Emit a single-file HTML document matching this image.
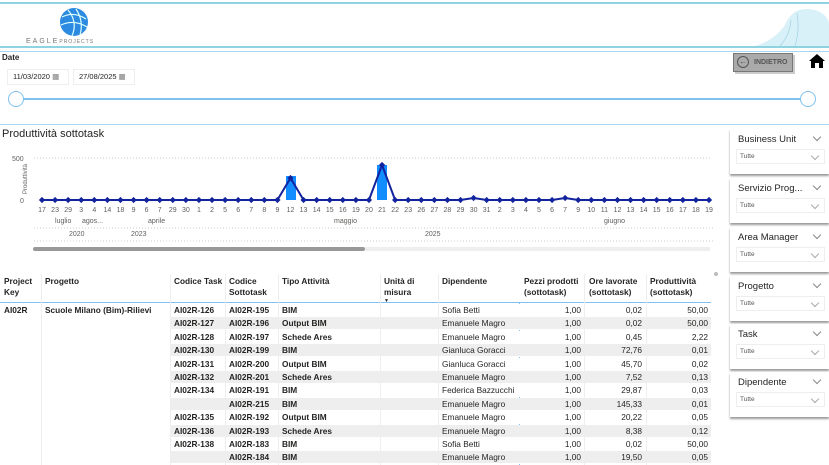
<!DOCTYPE html>
<html><head><meta charset="utf-8"><style>
*{margin:0;padding:0;box-sizing:border-box}
body{width:829px;height:465px;overflow:hidden;background:#fff;font-family:"Liberation Sans",sans-serif;position:relative;color:#252423}
.a{position:absolute}
.hl{position:absolute;left:0;width:829px;height:2px;background:#8fd3e0}
.row{position:absolute;left:0;width:711px;height:13.4px;font-size:8.3px;line-height:13.4px}
.row span{position:absolute;white-space:nowrap}
.r{text-align:right}
.card{position:absolute;left:730px;width:99px;background:#fff;box-shadow:0 2px 2px #999;}
.card b{position:absolute;left:8px;top:5px;font-size:9.5px;font-weight:normal;color:#252423}
.card i{position:absolute;right:9px;top:5px;width:6px;height:6px;border-right:1px solid #888;border-bottom:1px solid #888;transform:rotate(45deg)}
.dd{position:absolute;left:6px;right:4px;top:20px;height:15px;border:1px solid #eee;font-size:6.5px;line-height:13px;padding-left:3px;color:#555}
.dd:after{content:"";position:absolute;right:6px;top:3px;width:5px;height:5px;border-right:1px solid #aaa;border-bottom:1px solid #aaa;transform:rotate(45deg)}
</style></head><body>
<div class="hl" style="top:2px"></div>
<div class="hl" style="top:46px"></div>
<div class="a" style="top:51px;left:0;width:829px;height:1px;background:#a8d8f0"></div>
<div class="a" style="top:124px;left:0;width:829px;height:1px;background:#a8d8f0"></div>
<svg class="a" style="left:58px;top:7px" width="32" height="30" viewBox="0 0 32 30"><circle cx="16" cy="15" r="14" fill="#2c8be0"/><path d="M4 10 Q16 4 28 12 M3 18 Q16 12 29 20 M10 3 Q20 15 14 29 M18 2 Q26 14 22 28" stroke="#dff" stroke-width="1.2" fill="none"/></svg>
<div class="a" style="left:26px;top:38px;font-size:7px;letter-spacing:2px;color:#777">EAGLE<span style="font-size:5px;letter-spacing:1px">PROJECTS</span></div>
<svg class="a" style="left:755px;top:5px" width="74" height="41"><path d="M0 41 Q20 35 30 20 Q38 0 60 5 Q74 10 74 20 L74 41Z" fill="#d8f0f8"/><path d="M25 41 Q35 30 36 15 M40 41 Q45 25 42 8" stroke="#9cd" fill="none" stroke-width=".6"/></svg>
<div class="a" style="left:2px;top:53px;font-size:8px;font-weight:bold">Date</div>
<div class="a" style="left:7px;top:69px;width:62px;height:16px;border:1px solid #eee;font-size:7.5px;line-height:14px;padding-left:5px">11/03/2020 <span style="color:#777">▦</span></div>
<div class="a" style="left:73px;top:69px;width:62px;height:16px;border:1px solid #eee;font-size:7.5px;line-height:14px;padding-left:5px">27/08/2025 <span style="color:#777">▦</span></div>
<div class="a" style="left:16px;top:98px;width:795px;height:2px;background:#7fc1ef"></div>
<div class="a" style="left:8px;top:91px;width:16px;height:16px;border-radius:50%;border:1.5px solid #7fc1ef;background:#fff"></div>
<div class="a" style="left:800px;top:91px;width:16px;height:16px;border-radius:50%;border:1.5px solid #7fc1ef;background:#fff"></div>
<div class="a" style="left:733px;top:53px;width:60px;height:19px;background:#aaa;border:1px solid #777;box-shadow:2px 2px 0 #ccc;font-size:7px;font-weight:bold;color:#555;line-height:17px;padding-left:20px">INDIETRO</div>
<div class="a" style="left:737px;top:56px;width:12px;height:12px;border:1.3px solid #555;border-radius:50%;font-size:8px;line-height:9px;text-align:center;color:#555">←</div>
<svg class="a" style="left:808px;top:53px" width="18" height="16"><path d="M9 1 L1 8 L3 8 L3 15 L7 15 L7 10 L11 10 L11 15 L15 15 L15 8 L17 8Z" fill="#000"/></svg>
<div class="a" style="left:2px;top:128px;font-size:11px">Produttività sottotask</div>
<svg class="a" style="left:0;top:150px" width="725" height="105" font-family="Liberation Sans" font-size="7" fill="#605e5c">
<text x="5" y="58" transform="rotate(-90 9 40)" font-size="6">Produttività</text>
<text x="12" y="11">500</text><text x="20" y="53">0</text>
<line x1="34" y1="8" x2="712" y2="8" stroke="#ccc" stroke-dasharray="1,2"/>
<rect x="286" y="26" width="10" height="24" fill="#118dff"/>
<rect x="377" y="15" width="10" height="35" fill="#118dff"/>
<polyline id="pl" fill="none" stroke="#12239e" stroke-width="2" points=""/>
<g id="dots" fill="#12239e"></g>
<g id="lb" text-anchor="middle"></g>
<text x="55" y="73">luglio</text><text x="82" y="73">agos...</text><text x="148" y="73">aprile</text><text x="334" y="73">maggio</text><text x="604" y="73">giugno</text>
<text x="69" y="86">2020</text><text x="131" y="86">2023</text><text x="425" y="86">2025</text>
<line x1="34" y1="78" x2="715" y2="78" stroke="#ccc" stroke-dasharray="1,2"/>
<line x1="34" y1="91" x2="715" y2="91" stroke="#ccc" stroke-dasharray="1,2"/>
<rect x="33" y="97" width="332" height="4" rx="2" fill="#999"/><rect x="365" y="97" width="345" height="4" fill="#eee"/>
</svg>
<script>
var L="17 23 29 3 4 14 18 9 6 7 29 30 1 2 5 6 7 8 9 12 13 14 15 16 19 20 21 22 23 26 27 28 29 30 31 2 3 4 5 6 7 9 10 11 12 13 14 15 16 17 18 19".split(" ");
var pts=[],d="",t="",dx=(709-42)/(L.length-1);
L.forEach(function(l,i){var x=42+i*dx,y=50;if(i==19)y=28;if(i==26)y=15;if(i==33||i==40)y=48;pts.push(x+","+y);d+='<rect x="'+(x-2.2)+'" y="'+(y-2.2)+'" width="4.4" height="4.4" transform="rotate(45 '+x+' '+y+')"/>';t+='<text x="'+x+'" y="62">'+l+'</text>';});
document.getElementById("pl").setAttribute("points",pts.join(" "));
document.getElementById("dots").innerHTML=d;document.getElementById("lb").innerHTML=t;
</script>
<div class="a" style="left:0;top:272px;width:711px;height:29px;font-size:8.3px;font-weight:bold;line-height:11px">
<span class="a" style="left:4px;top:4px">Project<br>Key</span><span class="a" style="left:45px;top:4px">Progetto</span>
<span class="a" style="left:174px;top:4px">Codice Task</span><span class="a" style="left:229px;top:4px">Codice<br>Sottotask</span>
<span class="a" style="left:282px;top:4px">Tipo Attività</span><span class="a" style="left:384px;top:4px">Unità di<br>misura</span>
<span class="a" style="left:384px;top:24px;font-size:5px">▼</span>
<span class="a" style="left:442px;top:4px">Dipendente</span><span class="a" style="left:524px;top:4px">Pezzi prodotti<br>(sottotask)</span>
<span class="a" style="left:589px;top:4px">Ore lavorate<br>(sottotask)</span><span class="a" style="left:650px;top:4px">Produttività<br>(sottotask)</span>
</div>
<div class="a" style="left:0;top:302px;width:711px;height:1px;background:#7fc1ef"></div>
<div class="a" style="left:519px;top:302px;width:1px;height:163px;background:#7fc1ef"></div>
<div class="a" style="left:714px;top:272px;width:4px;height:4px;border-radius:50%;background:#bbb"></div>
<div id="tb"></div>
<script>
var R=[["AI02R-126","AI02R-195","BIM","Sofia Betti","0,02","50,00"],["AI02R-127","AI02R-196","Output BIM","Emanuele Magro","0,02","50,00"],["AI02R-128","AI02R-197","Schede Ares","Emanuele Magro","0,45","2,22"],["AI02R-130","AI02R-199","BIM","Gianluca Goracci","72,76","0,01"],["AI02R-131","AI02R-200","Output BIM","Gianluca Goracci","45,70","0,02"],["AI02R-132","AI02R-201","Schede Ares","Emanuele Magro","7,52","0,13"],["AI02R-134","AI02R-191","BIM","Federica Bazzucchi","29,87","0,03"],["","AI02R-215","BIM","Emanuele Magro","145,33","0,01"],["AI02R-135","AI02R-192","Output BIM","Emanuele Magro","20,22","0,05"],["AI02R-136","AI02R-193","Schede Ares","Emanuele Magro","8,38","0,12"],["AI02R-138","AI02R-183","BIM","Sofia Betti","0,02","50,00"],["","AI02R-184","BIM","Emanuele Magro","19,50","0,05"]];
var h="";R.forEach(function(r,i){var y=304+i*13.4,bg=i%2?"#eee":"#fff";
h+='<div class="row" style="top:'+y+'px"><span style="left:170px;width:541px;height:13px;background:'+bg+';border-bottom:1px solid #fff"></span>'+
(i==0?'<span style="left:4px;font-weight:bold">AI02R</span><span style="left:45px;font-weight:bold">Scuole Milano (Bim)-Rilievi</span>':'')+
'<span style="left:174px;font-weight:bold">'+r[0]+'</span><span style="left:229px;font-weight:bold">'+r[1]+'</span><span style="left:282px;font-weight:bold">'+r[2]+'</span><span style="left:442px">'+r[3]+'</span><span class="r" style="left:520px;width:61px">1,00</span><span class="r" style="left:585px;width:57px">'+r[4]+'</span><span class="r" style="left:647px;width:61px">'+r[5]+'</span></div>';});
document.getElementById("tb").innerHTML=h;
</script>
<div class="a" style="left:41px;top:274px;width:1px;height:191px;background:#eee"></div>
<div class="a" style="left:170px;top:274px;width:1px;height:191px;background:#eee"></div>
<div class="a" style="left:225px;top:274px;width:1px;height:191px;background:#eee"></div>
<div class="a" style="left:278px;top:274px;width:1px;height:191px;background:#eee"></div>
<div class="a" style="left:380px;top:274px;width:1px;height:191px;background:#eee"></div>
<div class="a" style="left:438px;top:274px;width:1px;height:191px;background:#eee"></div>
<div class="a" style="left:584px;top:274px;width:1px;height:191px;background:#eee"></div>
<div class="a" style="left:646px;top:274px;width:1px;height:191px;background:#eee"></div>
<div class="card" style="top:129px;height:45px"><b>Business Unit</b><i></i><div class="dd">Tutte</div></div>
<div class="card" style="top:178px;height:45px"><b>Servizio Prog...</b><i></i><div class="dd">Tutte</div></div>
<div class="card" style="top:227px;height:45px"><b>Area Manager</b><i></i><div class="dd">Tutte</div></div>
<div class="card" style="top:276px;height:45px"><b>Progetto</b><i></i><div class="dd">Tutte</div></div>
<div class="card" style="top:324px;height:45px"><b>Task</b><i></i><div class="dd">Tutte</div></div>
<div class="card" style="top:372px;height:45px"><b>Dipendente</b><i></i><div class="dd">Tutte</div></div>
</body></html>
